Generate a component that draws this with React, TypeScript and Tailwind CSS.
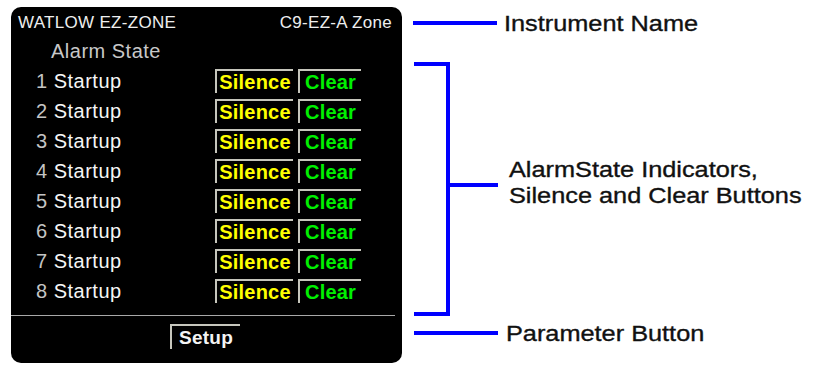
const alarms = [1, 2, 3, 4, 5, 6, 7, 8];

function AlarmRow({ n }: { n: number }) {
  return (
    <div className="h-[30px] flex items-center">
      <div className="w-[204px] pl-[25px] text-[20px] leading-[30px] tracking-[0.5px] whitespace-pre">
        <span className="text-[#c4c4c4]">{n}</span>
        <span className="text-[#f6f6f6]"> Startup</span>
      </div>
      <button className="w-[78px] h-[24px] border-t-2 border-l-2 border-[#c6c6bc] flex items-center justify-center text-[20px] leading-none font-bold tracking-[0.2px] text-[#ffff00]">
        Silence
      </button>
      <button className="ml-[5px] w-[63px] h-[24px] border-t-2 border-l-2 border-[#c6c6bc] flex items-center justify-center text-[20px] leading-none font-bold tracking-[0.2px] text-[#00f000]">
        Clear
      </button>
    </div>
  );
}

export default function App() {
  return (
    <div className="w-[816px] h-[366px] bg-white flex overflow-hidden font-['Liberation_Sans',Arial,sans-serif]">
      {/* instrument panel */}
      <div className="w-[391px] h-[356px] mt-[7px] ml-[11px] bg-black rounded-[10px] pt-[4px] flex flex-col shrink-0">
        <div className="h-[24px] flex items-center justify-between pl-[7px] pr-[10px] text-[17px] tracking-[0.3px] text-[#eeeeee]">
          <span>WATLOW EZ-ZONE</span>
          <span>C9-EZ-A Zone</span>
        </div>
        <div className="h-[31px] flex items-center pl-[40px] text-[20px] tracking-[0.5px] text-[#c8c8c8]">
          Alarm State
        </div>

        {alarms.map((n) => (
          <AlarmRow key={n} n={n} />
        ))}

        <div className="mt-[9px] h-[1px] mr-[7px] bg-[#a8a8a8]" />

        <button className="mt-[8px] ml-[159px] w-[70px] h-[25px] border-t-2 border-l-2 border-[#c6c6bc] flex items-center justify-center text-[19px] leading-none font-bold tracking-[0.25px] text-[#f4f4f4]">
          Setup
        </button>
      </div>

      {/* callouts */}
      <div className="flex flex-col pl-[11px] text-[22px] text-[#111] [-webkit-text-stroke:0.35px_#111]">
        <div className="h-[46px] flex items-center">
          <div className="w-[84px] h-[4px] bg-[#0000ff]" />
          <span className="ml-[7px] inline-block origin-left scale-x-[1.15] whitespace-nowrap">Instrument Name</span>
        </div>

        <div className="mt-[16px] flex items-start">
          <div className="ml-[1px] w-[36px] h-[254px] border-t-4 border-r-4 border-b-4 border-[#0000ff]" />
          <div className="mt-[121px] w-[48px] h-[4px] bg-[#0000ff]" />
          <div className="mt-[95px] ml-[11px] leading-[26px] origin-left scale-x-[1.15] whitespace-nowrap">
            <div>AlarmState Indicators,</div>
            <div>Silence and Clear Buttons</div>
          </div>
        </div>

        <div className="h-[34px] flex items-center">
          <div className="ml-[1px] w-[84px] h-[4px] bg-[#0000ff]" />
          <span className="ml-[8px] inline-block origin-left scale-x-[1.15] whitespace-nowrap">Parameter Button</span>
        </div>
      </div>
    </div>
  );
}
